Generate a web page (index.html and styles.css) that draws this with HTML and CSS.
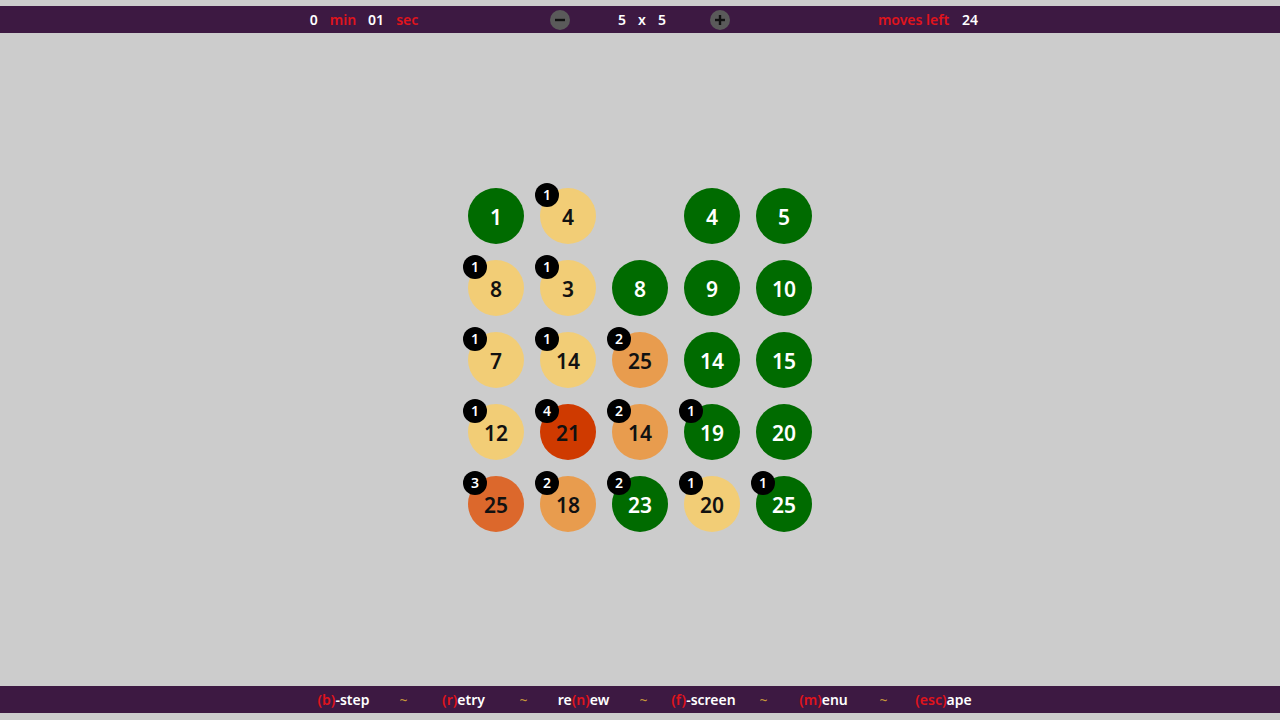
FILE: index.html
```html
<!DOCTYPE html>
<html>
<head>
<meta charset="utf-8">
<link rel="stylesheet" href="styles.css">
</head>
<body>
<div class="page">
  <header class="bar top">
    <div class="timer">
      <span class="val">0</span><span class="lbl">min</span><span class="val">01</span><span class="lbl">sec</span>
    </div>
    <div class="size">
      <span class="btn"><svg viewBox="0 0 20 20" width="20" height="20"><circle cx="10" cy="10" r="10" fill="#5a5a5a"/><rect x="5" y="8.8" width="10" height="2.4" fill="#111"/></svg></span>
      <span class="dims"><span>5</span><span>x</span><span>5</span></span>
      <span class="btn"><svg viewBox="0 0 20 20" width="20" height="20"><circle cx="10" cy="10" r="10" fill="#5a5a5a"/><rect x="5" y="8.8" width="10" height="2.4" fill="#111"/><rect x="8.8" y="5" width="2.4" height="10" fill="#111"/></svg></span>
    </div>
    <div class="moves">
      <span class="lbl">moves left</span><span class="val">24</span>
    </div>
  </header>

  <main class="board">
    <div class="grid">
      <div class="cell"><div class="disc green">1</div></div>
      <div class="cell"><div class="disc yellow">4<span class="badge">1</span></div></div>
      <div class="cell"></div>
      <div class="cell"><div class="disc green">4</div></div>
      <div class="cell"><div class="disc green">5</div></div>

      <div class="cell"><div class="disc yellow">8<span class="badge">1</span></div></div>
      <div class="cell"><div class="disc yellow">3<span class="badge">1</span></div></div>
      <div class="cell"><div class="disc green">8</div></div>
      <div class="cell"><div class="disc green">9</div></div>
      <div class="cell"><div class="disc green">10</div></div>

      <div class="cell"><div class="disc yellow">7<span class="badge">1</span></div></div>
      <div class="cell"><div class="disc yellow">14<span class="badge">1</span></div></div>
      <div class="cell"><div class="disc orange">25<span class="badge">2</span></div></div>
      <div class="cell"><div class="disc green">14</div></div>
      <div class="cell"><div class="disc green">15</div></div>

      <div class="cell"><div class="disc yellow">12<span class="badge">1</span></div></div>
      <div class="cell"><div class="disc red">21<span class="badge">4</span></div></div>
      <div class="cell"><div class="disc orange">14<span class="badge">2</span></div></div>
      <div class="cell"><div class="disc green">19<span class="badge">1</span></div></div>
      <div class="cell"><div class="disc green">20</div></div>

      <div class="cell"><div class="disc dark">25<span class="badge">3</span></div></div>
      <div class="cell"><div class="disc orange">18<span class="badge">2</span></div></div>
      <div class="cell"><div class="disc green">23<span class="badge">2</span></div></div>
      <div class="cell"><div class="disc yellow">20<span class="badge">1</span></div></div>
      <div class="cell"><div class="disc green">25<span class="badge">1</span></div></div>
    </div>
  </main>

  <footer class="bar bottom">
    <div class="keys">
      <span class="key"><em>(b)</em>-step</span>
      <span class="sep">~</span>
      <span class="key"><em>(r)</em>etry</span>
      <span class="sep">~</span>
      <span class="key">re<em>(n)</em>ew</span>
      <span class="sep">~</span>
      <span class="key"><em>(f)</em>-screen</span>
      <span class="sep">~</span>
      <span class="key"><em>(m)</em>enu</span>
      <span class="sep">~</span>
      <span class="key"><em>(esc)</em>ape</span>
    </div>
  </footer>
</div>
</body>
</html>
```

FILE: styles.css
```css
* { box-sizing: border-box; }
html, body { margin: 0; padding: 0; }
body {
  background: #cccccc;
  font-family: "Noto Sans", "DejaVu Sans", sans-serif;
  font-weight: 600;
  width: 1280px;
  height: 720px;
  overflow: hidden;
}
.page {
  display: flex;
  flex-direction: column;
  height: 720px;
  padding: 6px 0 7px;
}
.bar {
  height: 27px;
  background: #3d1942;
  color: #ffffff;
  font-size: 14px;
  display: flex;
  align-items: center;
  flex: 0 0 auto;
}
.top {
  display: grid;
  grid-template-columns: 220px 290px 260px 316px;
  align-items: center;
}
.timer, .moves {
  display: flex;
  justify-content: center;
  gap: 12px;
}
.timer { grid-column: 2; margin-left: -2px; }
.lbl { color: #e0141c; }
.size {
  display: flex;
  justify-content: center;
  align-items: center;
}
.btn { display: flex; width: 20px; height: 20px; }
.dims {
  display: flex;
  gap: 12px;
  margin: 0 44px 0 48px;
}
.moves { gap: 13px; }

.board {
  flex: 1 1 auto;
  display: flex;
  align-items: center;
  justify-content: center;
}
.grid {
  display: grid;
  grid-template-columns: repeat(5, 72px);
  grid-template-rows: repeat(5, 72px);
}
.cell {
  display: flex;
  align-items: center;
  justify-content: center;
}
.disc {
  position: relative;
  width: 56px;
  height: 56px;
  border-radius: 50%;
  display: flex;
  align-items: center;
  justify-content: center;
  font-size: 21px;
  font-weight: 600;
  color: #111;
  padding-top: 3px;
}
.green { background: #006b00; color: #fff; }
.yellow { background: #f2cd76; }
.orange { background: #e89c4e; }
.dark { background: #dc682c; }
.red { background: #cf3a00; }
.badge {
  position: absolute;
  left: -5px;
  top: -5px;
  width: 24px;
  height: 24px;
  border-radius: 50%;
  background: #000;
  color: #fff;
  font-size: 14px;
  font-weight: 600;
  display: flex;
  align-items: center;
  justify-content: center;
}

.bottom { justify-content: center; }
.keys {
  display: grid;
  grid-template-columns: repeat(11, 60px);
  justify-items: center;
  margin-left: 7px;
}
.key { white-space: nowrap; }
.key em { font-style: normal; color: #e0141c; }
.sep { color: #c89a3a; font-weight: 400; }
```
